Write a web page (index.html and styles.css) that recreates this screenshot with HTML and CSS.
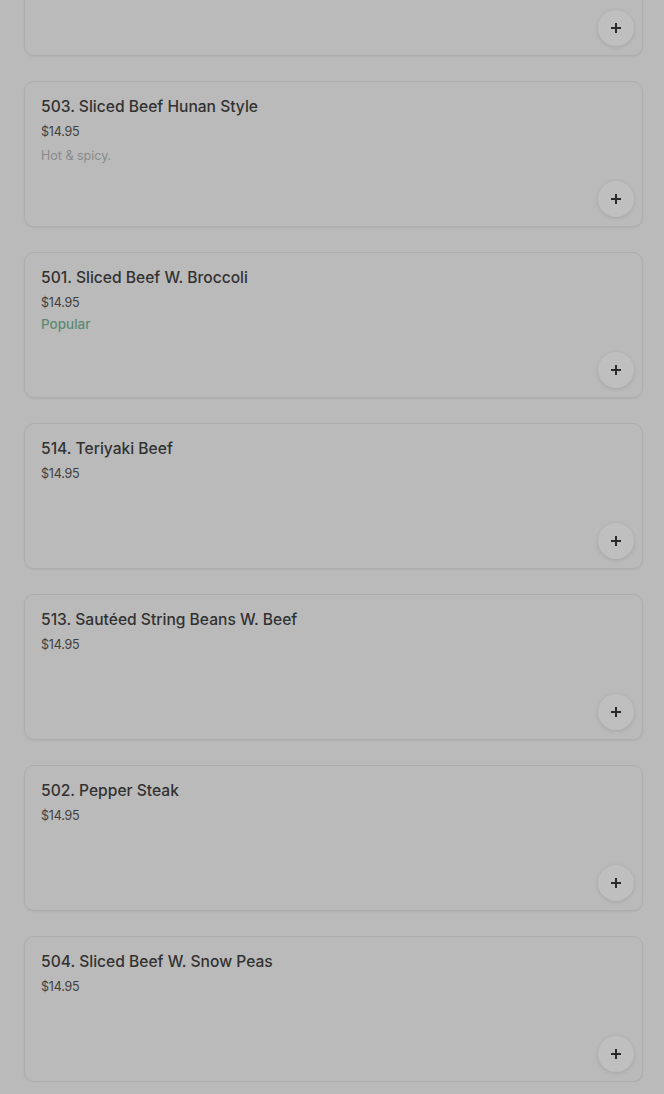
FILE: index.html
```html
<!DOCTYPE html>
<html lang="en">
<head>
  <meta charset="UTF-8" />
  <meta name="viewport" content="width=device-width, initial-scale=1.0"/>
  <title>Beef</title>
  <link rel="stylesheet" href="styles.css">
</head>
<body>
  <main class="menu">
    <div class="item">
      <div class="item-info">
        <h3>512. Beef W. Mixed Vegetables</h3>
        <p class="price">$14.95</p>
      </div>
      <button class="add-btn" aria-label="Add">
        <svg viewBox="0 0 12 12" width="12" height="12"><path d="M6 1v10M1 6h10" stroke="currentColor" stroke-width="2"/></svg>
      </button>
    </div>

    <div class="item">
      <div class="item-info">
        <h3>503. Sliced Beef Hunan Style</h3>
        <p class="price">$14.95</p>
        <p class="desc">Hot &amp; spicy.</p>
      </div>
      <button class="add-btn" aria-label="Add">
        <svg viewBox="0 0 12 12" width="12" height="12"><path d="M6 1v10M1 6h10" stroke="currentColor" stroke-width="2"/></svg>
      </button>
    </div>

    <div class="item">
      <div class="item-info">
        <h3>501. Sliced Beef W. Broccoli</h3>
        <p class="price">$14.95</p>
        <p class="tag">Popular</p>
      </div>
      <button class="add-btn" aria-label="Add">
        <svg viewBox="0 0 12 12" width="12" height="12"><path d="M6 1v10M1 6h10" stroke="currentColor" stroke-width="2"/></svg>
      </button>
    </div>

    <div class="item">
      <div class="item-info">
        <h3>514. Teriyaki Beef</h3>
        <p class="price">$14.95</p>
      </div>
      <button class="add-btn" aria-label="Add">
        <svg viewBox="0 0 12 12" width="12" height="12"><path d="M6 1v10M1 6h10" stroke="currentColor" stroke-width="2"/></svg>
      </button>
    </div>

    <div class="item">
      <div class="item-info">
        <h3>513. Sautéed String Beans W. Beef</h3>
        <p class="price">$14.95</p>
      </div>
      <button class="add-btn" aria-label="Add">
        <svg viewBox="0 0 12 12" width="12" height="12"><path d="M6 1v10M1 6h10" stroke="currentColor" stroke-width="2"/></svg>
      </button>
    </div>

    <div class="item">
      <div class="item-info">
        <h3>502. Pepper Steak</h3>
        <p class="price">$14.95</p>
      </div>
      <button class="add-btn" aria-label="Add">
        <svg viewBox="0 0 12 12" width="12" height="12"><path d="M6 1v10M1 6h10" stroke="currentColor" stroke-width="2"/></svg>
      </button>
    </div>

    <div class="item">
      <div class="item-info">
        <h3>504. Sliced Beef W. Snow Peas</h3>
        <p class="price">$14.95</p>
      </div>
      <button class="add-btn" aria-label="Add">
        <svg viewBox="0 0 12 12" width="12" height="12"><path d="M6 1v10M1 6h10" stroke="currentColor" stroke-width="2"/></svg>
      </button>
    </div>
  </main>
</body>
</html>
```

FILE: styles.css
```css
body {
  margin: 0;
  background: #bababa;
  font-family: Inter, 'Noto Sans', sans-serif;
  color: #333;
  overflow: hidden;
}

.menu {
  display: flex;
  flex-direction: column;
  gap: 25px;
  margin: -90px 21px 0 24px;
}

.item {
  height: 146px;
  box-sizing: border-box;
  border: 1px solid #adadad;
  border-radius: 10px;
  box-shadow: 0 1px 2px rgba(0, 0, 0, 0.06);
  padding: 15px 8px 9px 16px;
  display: flex;
  justify-content: space-between;
  align-items: flex-end;
}

.item-info {
  align-self: flex-start;
}

.item h3 {
  margin: 0;
  font-size: 15.6px;
  font-weight: 500;
  line-height: 20px;
  color: #323232;
}

.price {
  margin: 6px 0 0;
  font-size: 12.5px;
  line-height: 18px;
  color: #404040;
  letter-spacing: -0.2px;
}

.desc {
  margin: 6px 0 0;
  font-size: 12.5px;
  line-height: 18px;
  color: #8a8a8a;
}

.tag {
  margin: 3px 0 0;
  font-size: 13.5px;
  font-weight: 500;
  line-height: 18px;
  color: #5a8a72;
}

.add-btn {
  width: 36px;
  height: 36px;
  border: none;
  border-radius: 50%;
  background: #bfbfbf;
  box-shadow: 0 1px 4px rgba(0, 0, 0, 0.12);
  color: #2a2a2a;
  display: flex;
  align-items: center;
  justify-content: center;
  padding: 0;
  cursor: pointer;
}
```
